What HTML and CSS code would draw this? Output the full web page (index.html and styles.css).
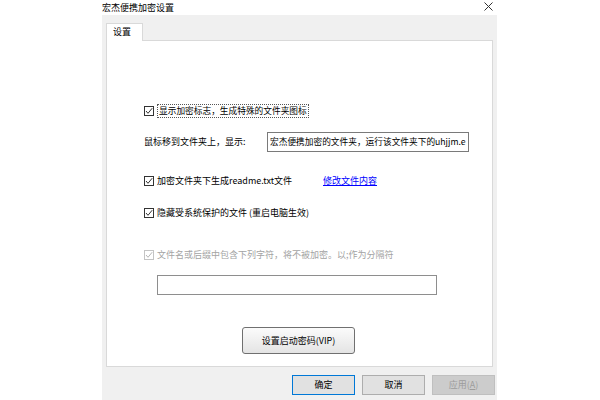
FILE: index.html
```html
<!DOCTYPE html>
<html lang="zh-CN">
<head>
<meta charset="utf-8">
<title>宏杰便携加密设置</title>
<link rel="stylesheet" href="styles.css">
</head>
<body>
<div class="titlebar">
  <span class="title">宏杰便携加密设置</span>
  <svg class="close" width="9" height="9" viewBox="0 0 9 9"><path d="M0.5 0.5 L8.5 8.5 M8.5 0.5 L0.5 8.5" stroke="#333" stroke-width="1" fill="none"/></svg>
</div>
<div class="dialog">
  <div class="tabs"><div class="tab">设置</div></div>
  <div class="panel">
    <div class="row row1">
      <span class="cb checked"><svg width="8" height="8" viewBox="0 0 8 8"><path d="M1 4 L3 6.3 L7.2 1.2" stroke="#333" stroke-width="1" fill="none"/></svg></span>
      <span class="focus">显示加密标志，生成特殊的文件夹图标</span>
    </div>
    <div class="row row2">
      <span class="lbl">鼠标移到文件夹上，显示:</span>
      <div class="field field1">宏杰便携加密的文件夹，运行该文件夹下的uhjjm.e</div>
    </div>
    <div class="row row3">
      <span class="cblabel">
        <span class="cb checked"><svg width="8" height="8" viewBox="0 0 8 8"><path d="M1 4 L3 6.3 L7.2 1.2" stroke="#333" stroke-width="1" fill="none"/></svg></span>
        <span class="txt">加密文件夹下生成readme.txt文件</span>
      </span>
      <a class="link" href="#">修改文件内容</a>
    </div>
    <div class="row row4">
      <span class="cb checked"><svg width="8" height="8" viewBox="0 0 8 8"><path d="M1 4 L3 6.3 L7.2 1.2" stroke="#333" stroke-width="1" fill="none"/></svg></span>
      <span class="txt">隐藏受系统保护的文件 (重启电脑生效)</span>
    </div>
    <div class="row row5 disabled">
      <span class="cb"><svg width="8" height="8" viewBox="0 0 8 8"><path d="M1 4 L3 6.3 L7.2 1.2" stroke="#b5b5b5" stroke-width="1" fill="none"/></svg></span>
      <span class="txt">文件名或后缀中包含下列字符，将不被加密。以;作为分隔符</span>
    </div>
    <div class="field field2"></div>
    <div class="vip">设置启动密码(VIP)</div>
  </div>
  <div class="buttons">
    <div class="btn default">确定</div>
    <div class="btn">取消</div>
    <div class="btn off">应用(<u>A</u>)</div>
  </div>
</div>
</body>
</html>
```

FILE: styles.css
```css
html, body {
  margin: 0;
  padding: 0;
  background: #ffffff;
}
body {
  font-family: "Noto Sans CJK SC", "Noto Sans", "Liberation Sans", sans-serif;
  font-size: 9px;
  color: #000;
  width: 600px;
  height: 400px;
  overflow: hidden;
}
.titlebar {
  margin-left: 102px;
  width: 395px;
  height: 15px;
  display: flex;
  align-items: center;
  justify-content: space-between;
}
.title {
  line-height: 15px;
  color: #000;
}
.close {
  margin-right: 4px;
  margin-top: -2px;
}
.dialog {
  margin-left: 102px;
  width: 395px;
  height: 385px;
  background: #f0f0f0;
  box-sizing: border-box;
  padding: 8px 4px 0 4px;
}
.tabs {
  display: flex;
  height: 17px;
}
.tab {
  width: 37px;
  height: 18px;
  box-sizing: border-box;
  background: #fff;
  border: 1px solid #d9d9d9;
  border-bottom: none;
  padding-left: 6px;
  line-height: 15px;
  position: relative;
  z-index: 1;
}
.panel {
  height: 327px;
  background: #fff;
  border: 1px solid #d9d9d9;
  box-sizing: border-box;
  padding-left: 37px;
  display: flex;
  flex-direction: column;
  align-items: flex-start;
}
.row {
  display: flex;
  align-items: center;
  height: 14px;
  line-height: 14px;
}
.cb {
  width: 10px;
  height: 10px;
  box-sizing: border-box;
  border: 1px solid #333;
  background: #fff;
  display: flex;
  align-items: center;
  justify-content: center;
  margin-right: 3px;
  flex: none;
}
.row1 { margin-top: 63px; }
.focus {
  border: 1px dotted #555;
  padding: 0 1px;
  height: 12px;
  line-height: 12px;
  font-size: 8.7px;
}
.row2 {
  margin-top: 14px;
  height: 20px;
}
.lbl {
  width: 123px;
}
.field {
  background: #fff;
  border: 1px solid #7a7a7a;
  box-sizing: border-box;
  height: 20px;
}
.field1 {
  width: 202px;
  white-space: nowrap;
  overflow: hidden;
  line-height: 18px;
  padding-left: 2px;
  font-size: 8.7px;
}
.row3 { margin-top: 22px; }
.cblabel {
  display: flex;
  align-items: center;
  width: 179px;
}
.link {
  color: #0000ff;
  text-decoration: underline;
}
.row4 { margin-top: 18px; }
.row5 { margin-top: 28px; }
.disabled { color: #a3a3a3; }
.disabled .cb { border-color: #c4c4c4; }
.field2 {
  margin-top: 13px;
  margin-left: 13px;
  width: 280px;
  border-color: #8e8e8e;
}
.vip {
  margin-top: 32px;
  margin-left: 98px;
  width: 113px;
  height: 27px;
  box-sizing: border-box;
  border: 1px solid #707070;
  border-radius: 3px;
  background: linear-gradient(#fbfbfb, #e4e4e4);
  text-align: center;
  line-height: 25px;
}
.buttons {
  display: flex;
  justify-content: flex-end;
  gap: 7px;
  margin-top: 8px;
  margin-right: -2px;
}
.btn {
  width: 63px;
  height: 20px;
  box-sizing: border-box;
  border: 1px solid #adadad;
  background: #e1e1e1;
  text-align: center;
  line-height: 18px;
}
.btn.default {
  border-color: #0078d7;
}
.btn.off {
  background: #cccccc;
  border-color: #bfbfbf;
  color: #9c9c9c;
}
```
